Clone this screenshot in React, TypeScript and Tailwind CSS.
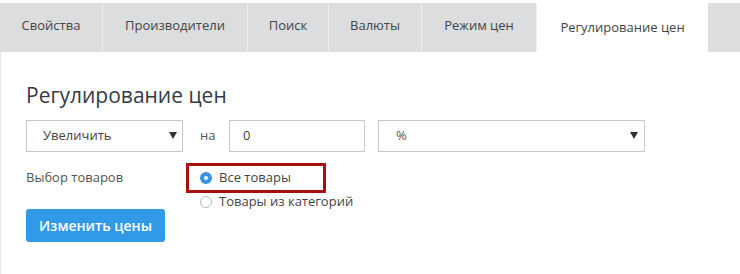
import React from "react";

const tabs = [
  { label: "Свойства", w: "w-[103px]" },
  { label: "Производители", w: "w-[145px]" },
  { label: "Поиск", w: "w-[81px]" },
  { label: "Валюты", w: "w-[93px]" },
  { label: "Режим цен", w: "w-[115px]" },
];

function Arrow() {
  return (
    <svg width="8" height="7" viewBox="0 0 8 7" className="shrink-0">
      <path d="M0 0 H8 L4 7 Z" fill="#333" />
    </svg>
  );
}

export default function App() {
  return (
    <div
      className="w-[740px] h-[274px] bg-white overflow-hidden pt-[3px] flex flex-col"
      style={{ fontFamily: '"Open Sans", "Noto Sans", sans-serif' }}
    >
      <div className="flex h-[49px] bg-[#dcdddf] text-[13px] text-[#444]">
        {tabs.map((t) => (
          <div
            key={t.label}
            className={`${t.w} flex items-center justify-center border-r border-[#eeeeee] pb-[4px]`}
          >
            {t.label}
          </div>
        ))}
        <div className="w-[171px] bg-white flex items-center justify-center text-[#444] pt-[1px]">
          Регулирование цен
        </div>
        <div className="flex-1" />
      </div>

      <div className="flex-1 border-l border-[#e6e6e6] pl-[25px] pt-[28px]">
        <h2 className="text-[21px] leading-[30px] text-[#353b45] font-normal">
          Регулирование цен
        </h2>

        <div className="mt-[10px] flex items-center text-[13px] text-[#444]">
          <div className="w-[157px] h-[32px] border border-[#c8c8c8] flex items-center justify-between pl-[16px] pr-[5px]">
            <span>Увеличить</span>
            <span className="-mt-[2px]"><Arrow /></span>
          </div>
          <span className="ml-[17px] w-[29px] text-[#555]">на</span>
          <div className="w-[136px] h-[32px] border border-[#c8c8c8] flex items-center pl-[13px]">
            0
          </div>
          <div className="ml-[13px] w-[267px] h-[32px] border border-[#c8c8c8] flex items-center justify-between pl-[17px] pr-[6px]">
            <span className="text-[#555]">%</span>
            <span className="-mt-[2px]"><Arrow /></span>
          </div>
        </div>

        <div className="mt-[11px] flex text-[13px] text-[#555]">
          <div className="w-[160px] h-[30px] flex items-center">Выбор товаров</div>
          <div className="flex flex-col">
            <div className="w-[140px] h-[30px] border-[3px] border-[#a50f10] flex items-center pl-[11px]">
              <span className="w-[12px] h-[12px] rounded-full bg-[#3a92e4] flex items-center justify-center">
                <span className="w-[4px] h-[4px] rounded-full bg-white" />
              </span>
              <span className="ml-[7px] text-[#444]">Все товары</span>
            </div>
            <div className="h-[18px] flex items-center pl-[14px]">
              <span className="w-[12px] h-[12px] rounded-full border border-[#b8b8b8] bg-white" />
              <span className="ml-[7px] text-[#444]">Товары из категорий</span>
            </div>
          </div>
        </div>

        <button className="mt-[-2px] w-[139px] h-[33px] rounded-[3px] bg-[#3099e8] text-white text-[14px] font-semibold flex items-center justify-center">
          Изменить цены
        </button>
      </div>
    </div>
  );
}
